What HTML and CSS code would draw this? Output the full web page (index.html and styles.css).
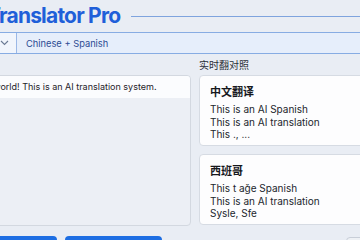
FILE: index.html
```html
<!DOCTYPE html>
<html lang="en">
<head>
<meta charset="utf-8">
<title>Translator Pro</title>
<link rel="stylesheet" href="styles.css">
</head>
<body>
<div class="app">
  <header class="header">
    <h1 class="title">Translator Pro</h1>
    <div class="rule"></div>
  </header>
  <div class="toolbar">
    <div class="select-btn">
      <svg width="9" height="6" viewBox="0 0 9 6"><path d="M1 1l3.5 3.5L8 1" fill="none" stroke="#6b7a94" stroke-width="1.1"/></svg>
    </div>
    <div class="mode">Chinese + Spanish</div>
  </div>
  <main class="main">
    <section class="left">
      <div class="panel">
        <div class="input">Hello world! This is an AI translation system.</div>
        <div class="panel-body"></div>
      </div>
    </section>
    <section class="right">
      <div class="label">实时翻对照</div>
      <div class="card">
        <div class="card-title">中文翻译</div>
        <div class="line">This is an AI Spanish</div>
        <div class="line">This is an AI translation</div>
        <div class="line">This ., ...</div>
      </div>
      <div class="card">
        <div class="card-title">西班哥</div>
        <div class="line">This t aǧe Spanish</div>
        <div class="line">This is an AI translation</div>
        <div class="line">Sysle, Sfe</div>
      </div>
    </section>
  </main>
  <div class="actions">
    <button class="btn primary one"></button>
    <button class="btn primary two"></button>
    <button class="btn ghost"></button>
  </div>
</div>
</body>
</html>
```
FILE: styles.css
```css
* { box-sizing: border-box; }
html, body { margin: 0; padding: 0; }
body {
  background: #e9edf4;
  font-family: Inter, "Noto Sans", "Noto Sans CJK SC", sans-serif;
  overflow: hidden;
  width: 360px;
  height: 240px;
}
.app {
  margin-left: -44px;
  width: 460px;
}
.header {
  display: flex;
  align-items: center;
  gap: 11px;
  padding-top: 3px;
  padding-left: 31px;
}
.title {
  margin: 0;
  font-size: 21px;
  line-height: 26px;
  font-weight: 700;
  color: #1f5fd9;
  letter-spacing: -0.8px;
}
.rule {
  flex: 1;
  height: 1px;
  background: #7fa4de;
  margin-top: 1px;
}
.toolbar {
  margin-top: 3px;
  display: flex;
  height: 22px;
  border-top: 1px solid #87ace3;
  border-bottom: 1px solid #87ace3;
  background: #e6eefb;
}
.select-btn {
  width: 61px;
  display: flex;
  align-items: center;
  justify-content: flex-end;
  padding-right: 7px;
  border-right: 1px solid #9bb8e6;
  background: #f1f5fc;
}
.mode {
  display: flex;
  align-items: center;
  padding-left: 9px;
  font-size: 9.3px;
  color: #2d4c93;
}
.main {
  margin-top: 4px;
  display: grid;
  grid-template-columns: 235px 1fr;
  column-gap: 8px;
}
.left { padding-top: 17px; }
.panel {
  height: 151px;
  border: 1px solid #d3d8e0;
  border-radius: 4px;
  background: #eceff5;
  overflow: hidden;
  display: flex;
  flex-direction: column;
}
.input {
  height: 22px;
  background: #fbfcfe;
  font-size: 9px;
  color: #1f2329;
  padding: 4px 6px 0 12px;
  line-height: 13px;
}
.panel-body { flex: 1; }
.right {
  display: flex;
  flex-direction: column;
  gap: 8px;
}
.label {
  font-size: 10px;
  line-height: 14px;
  color: #2a2f38;
  margin-bottom: -5px;
}
.card {
  height: 71px;
  background: #fdfdfe;
  border: 1px solid #d6dbe3;
  border-radius: 4px;
  padding: 8px 10px 0;
}
.card-title {
  font-size: 11px;
  line-height: 16px;
  font-weight: 700;
  color: #16181d;
  margin-bottom: 3px;
}
.line {
  font-size: 10px;
  line-height: 12.5px;
  color: #22262d;
}
.actions {
  margin-top: 10px;
  display: flex;
  gap: 8px;
  padding-left: 4px;
}
.btn {
  height: 24px;
  border-radius: 4px;
  border: none;
  padding: 0;
}
.primary { background: #1d6ee3; }
.one { width: 97px; }
.two { width: 97px; }
.ghost {
  width: 40px;
  margin-left: 176px;
  margin-top: 1px;
  background: #eef1f5;
  border: 1px solid #c8ced8;
}
```
